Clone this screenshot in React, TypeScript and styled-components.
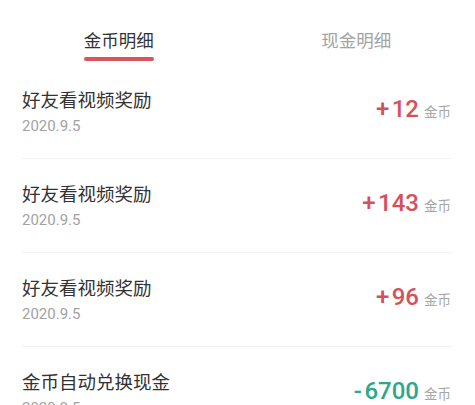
import React, { useState } from "react";
import styled, { createGlobalStyle } from "styled-components";

const GlobalStyle = createGlobalStyle`
  html, body {
    margin: 0;
    padding: 0;
    background: #ffffff;
  }
  body {
    font-family: Roboto, "Noto Sans CJK SC", "Noto Sans", sans-serif;
  }
`;

const Page = styled.div`
  width: 475px;
  height: 405px;
  overflow: hidden;
  background: #ffffff;
`;

const TabBar = styled.div`
  display: flex;
  padding-top: 28px;
  height: 65px;
  box-sizing: border-box;
`;

const Tab = styled.button<{ $active: boolean }>`
  flex: 1;
  display: flex;
  flex-direction: column;
  align-items: center;
  background: none;
  border: none;
  padding: 0;
  cursor: pointer;
  font-family: "Noto Sans CJK SC", sans-serif;
  font-size: 17.5px;
  line-height: 24px;
  color: ${(p) => (p.$active ? "#333333" : "#a3a3a3")};
`;

const TabLabel = styled.span`
  display: inline-flex;
  flex-direction: column;
  align-items: stretch;
`;

const Underline = styled.span<{ $active: boolean }>`
  height: 4px;
  margin-top: 5px;
  border-radius: 2px;
  background: ${(p) => (p.$active ? "#d9545c" : "transparent")};
`;

const List = styled.div`
  padding: 0 22px;
`;

const Row = styled.div`
  display: flex;
  align-items: center;
  justify-content: space-between;
  padding: 22px 0 22px;
  border-bottom: 1px solid #f2f2f2;
`;

const Info = styled.div`
  display: flex;
  flex-direction: column;
`;

const Title = styled.div`
  font-family: "Noto Sans CJK SC", sans-serif;
  font-size: 18.5px;
  line-height: 24px;
  color: #333333;
`;

const DateText = styled.div`
  margin-top: 5px;
  font-family: Roboto, sans-serif;
  font-size: 15px;
  line-height: 20px;
  color: #a2a2a2;
`;

const Amount = styled.div<{ $positive: boolean }>`
  display: flex;
  align-items: baseline;
  margin: 0 2px 4px 0;
  font-family: Roboto, sans-serif;
  font-weight: 500;
  font-size: 24px;
  line-height: 28px;
  color: ${(p) => (p.$positive ? "#d6505a" : "#2fa68a")};
`;

const Sign = styled.span`
  margin-right: 2.5px;
`;

const Unit = styled.span`
  margin-left: 5px;
  font-family: "Noto Sans CJK SC", sans-serif;
  font-weight: 400;
  font-size: 13.5px;
  color: #a6a6a6;
`;

const records = [
  { title: "好友看视频奖励", date: "2020.9.5", value: 12 },
  { title: "好友看视频奖励", date: "2020.9.5", value: 143 },
  { title: "好友看视频奖励", date: "2020.9.5", value: 96 },
  { title: "金币自动兑换现金", date: "2020.9.5", value: -6700 },
];

export default function App() {
  const [tab, setTab] = useState(0);
  const tabs = ["金币明细", "现金明细"];

  return (
    <Page>
      <GlobalStyle />
      <TabBar>
        {tabs.map((t, i) => (
          <Tab key={t} $active={tab === i} onClick={() => setTab(i)}>
            <TabLabel>
              {t}
              <Underline $active={tab === i} />
            </TabLabel>
          </Tab>
        ))}
      </TabBar>
      <List>
        {records.map((r, i) => (
          <Row key={i}>
            <Info>
              <Title>{r.title}</Title>
              <DateText>{r.date}</DateText>
            </Info>
            <Amount $positive={r.value > 0}>
              <Sign>{r.value > 0 ? "+" : "-"}</Sign>
              {Math.abs(r.value)}
              <Unit>金币</Unit>
            </Amount>
          </Row>
        ))}
      </List>
    </Page>
  );
}
